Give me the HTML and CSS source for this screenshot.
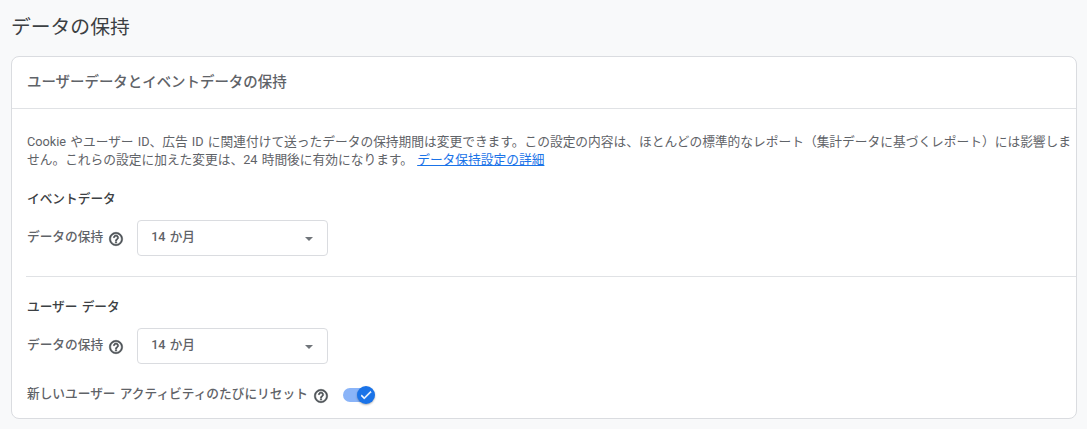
FILE: index.html
```html
<!DOCTYPE html>
<html lang="ja">
<head>
    <meta charset="UTF-8">
    <meta name="viewport" content="width=device-width, initial-scale=1.0">
    <title>データの保持</title>
    <link rel="stylesheet" href="styles.css">
</head>
<body>
    <h1 class="page-title">データの保持</h1>

    <div class="card">
        <div class="card-header">ユーザーデータとイベントデータの保持</div>

        <div class="card-body">
            <p class="description">Cookie やユーザー ID、広告 ID に関連付けて送ったデータの保持期間は変更できます。この設定の内容は、ほとんどの標準的なレポート（集計データに基づくレポート）には影響しません。これらの設定に加えた変更は、24 時間後に有効になります。 <a class="link" href="#">データ保持設定の詳細</a></p>

            <h3 class="section-title first">イベントデータ</h3>
            <div class="field">
                <span class="field-label">データの保持</span>
                <svg class="help" viewBox="0 0 24 24"><path d="M11 18h2v-2h-2v2zm1-16C6.48 2 2 6.48 2 12s4.48 10 10 10 10-4.48 10-10S17.52 2 12 2zm0 18c-4.41 0-8-3.59-8-8s3.59-8 8-8 8 3.59 8 8-3.59 8-8 8zm0-14c-2.21 0-4 1.79-4 4h2c0-1.1.9-2 2-2s2 .9 2 2c0 2-3 1.75-3 5h2c0-2.25 3-2.5 3-5 0-2.21-1.79-4-4-4z"/></svg>
                <div class="select"><span class="select-value">14 か月</span><span class="arrow"></span></div>
            </div>

            <hr class="divider">

            <h3 class="section-title">ユーザー データ</h3>
            <div class="field">
                <span class="field-label">データの保持</span>
                <svg class="help" viewBox="0 0 24 24"><path d="M11 18h2v-2h-2v2zm1-16C6.48 2 2 6.48 2 12s4.48 10 10 10 10-4.48 10-10S17.52 2 12 2zm0 18c-4.41 0-8-3.59-8-8s3.59-8 8-8 8 3.59 8 8-3.59 8-8 8zm0-14c-2.21 0-4 1.79-4 4h2c0-1.1.9-2 2-2s2 .9 2 2c0 2-3 1.75-3 5h2c0-2.25 3-2.5 3-5 0-2.21-1.79-4-4-4z"/></svg>
                <div class="select"><span class="select-value">14 か月</span><span class="arrow"></span></div>
            </div>

            <div class="reset-row">
                <span class="field-label">新しいユーザー アクティビティのたびにリセット</span>
                <svg class="help" viewBox="0 0 24 24"><path d="M11 18h2v-2h-2v2zm1-16C6.48 2 2 6.48 2 12s4.48 10 10 10 10-4.48 10-10S17.52 2 12 2zm0 18c-4.41 0-8-3.59-8-8s3.59-8 8-8 8 3.59 8 8-3.59 8-8 8zm0-14c-2.21 0-4 1.79-4 4h2c0-1.1.9-2 2-2s2 .9 2 2c0 2-3 1.75-3 5h2c0-2.25 3-2.5 3-5 0-2.21-1.79-4-4-4z"/></svg>
                <div class="toggle">
                    <div class="toggle-track"></div>
                    <div class="toggle-thumb">
                        <svg viewBox="0 0 24 24"><path d="M9 16.2 4.8 12l-1.4 1.4L9 19 21 7l-1.4-1.4z"/></svg>
                    </div>
                </div>
            </div>
        </div>
    </div>
</body>
</html>
```

FILE: styles.css
```css
html, body {
    height: 100%;
    overflow: hidden;
}
body {
    font-family: Roboto, "Noto Sans CJK JP", sans-serif;
    background-color: #f8f9fa;
    color: #5f6368;
    margin: 0;
    padding: 0 10px 0 11px;
    word-spacing: 1px;
}
.page-title {
    font-size: 19.8px;
    font-weight: 400;
    line-height: 28px;
    color: #3c4043;
    margin: 0;
    padding-top: 14px;
    height: 42px;
}
.card {
    background-color: white;
    border: 1px solid #dadce0;
    border-radius: 8px;
    height: 363px;
    box-sizing: border-box;
}
.card-header {
    height: 51px;
    line-height: 51px;
    padding-left: 15px;
    font-size: 14.45px;
    font-weight: 500;
    color: #5f6368;
    border-bottom: 1px solid #e0e2e5;
}
.card-body {
    padding: 24px 0 0 15px;
}
.description {
    font-size: 12.72px;
    line-height: 18px;
    margin: 0;
    color: #5f6368;
}
.link {
    color: #1a73e8;
    text-decoration: underline;
}
.section-title {
    font-size: 12.7px;
    font-weight: 500;
    line-height: 18px;
    color: #3c4043;
    margin: 0;
}
.section-title.first {
    margin-top: 21px;
}
.field {
    display: flex;
    align-items: center;
    margin-top: 12px;
}
.field-label {
    font-size: 12.7px;
    font-weight: 500;
    line-height: 16px;
    padding-bottom: 2px;
    color: #5f6368;
}
.help {
    width: 16px;
    height: 16px;
    margin-left: 5px;
    margin-top: 2px;
    fill: #4a4f54;
    stroke: #4a4f54;
    stroke-width: 0.8;
    flex-shrink: 0;
}
.select {
    display: flex;
    align-items: center;
    justify-content: space-between;
    width: 191px;
    height: 36px;
    box-sizing: border-box;
    margin-left: 13px;
    padding: 0 14px 0 13px;
    border: 1px solid #dadce0;
    border-radius: 4px;
    font-size: 12.65px;
    font-weight: 500;
    color: #5f6368;
}
.select-value {
    line-height: 16px;
    padding-bottom: 2px;
}
.arrow {
    width: 0;
    height: 0;
    margin-top: 1px;
    border-left: 4.5px solid transparent;
    border-right: 4.5px solid transparent;
    border-top: 4.5px solid #70757a;
}
.divider {
    border: none;
    border-top: 1px solid #e0e2e5;
    margin: 20px 0 0 -1px;
}
.divider + .section-title {
    margin-top: 21px;
}
.reset-row {
    display: flex;
    align-items: center;
    margin-top: 21px;
}
.toggle {
    position: relative;
    width: 34px;
    height: 20px;
    margin-left: 13px;
}
.toggle-track {
    position: absolute;
    left: 1px;
    top: 3px;
    width: 30px;
    height: 14px;
    border-radius: 7px;
    background-color: #8ab4f8;
}
.toggle-thumb {
    position: absolute;
    left: 15px;
    top: 1px;
    width: 18px;
    height: 18px;
    border-radius: 50%;
    background-color: #1a73e8;
    box-shadow: 0 1px 2px rgba(0,0,0,0.3);
    display: flex;
    align-items: center;
    justify-content: center;
}
.toggle-thumb svg {
    width: 14px;
    height: 14px;
    fill: white;
    stroke: white;
    stroke-width: 1;
}
```
